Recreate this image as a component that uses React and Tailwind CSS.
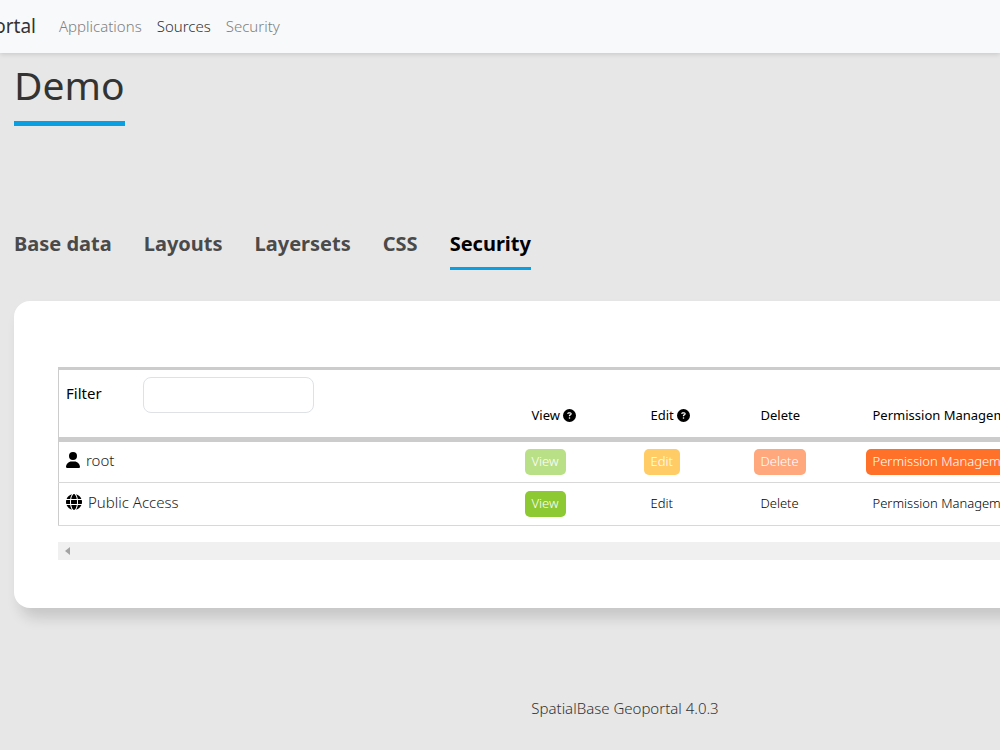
import React from 'react';
import { FaUser, FaGlobe, FaCircleQuestion } from 'react-icons/fa6';
import clsx from 'clsx';

const navLinks = [
  { label: 'Applications' },
  { label: 'Sources', active: true },
  { label: 'Security' },
];

const tabs = ['Base data', 'Layouts', 'Layersets', 'CSS', 'Security'];

const permissions = [
  { key: 'view', label: 'View', help: true },
  { key: 'edit', label: 'Edit', help: true },
  { key: 'delete', label: 'Delete' },
  { key: 'permissions', label: 'Permission Management' },
];

const rows = [
  {
    name: 'root',
    icon: FaUser,
    grants: {
      view: 'bg-[#bae087] text-white',
      edit: 'bg-[#ffcc66] text-white',
      delete: 'bg-[#ffa77d] text-white',
      permissions: 'bg-[#ff7029] text-white',
    },
  },
  {
    name: 'Public Access',
    icon: FaGlobe,
    grants: { view: 'bg-[#8cc932] text-white' },
  },
];

function Navbar() {
  return (
    <header className="relative flex h-[53px] items-center bg-[#f8f9fb] pb-px shadow-[0_1px_5px_rgba(0,0,0,0.15)]">
      <a href="#" className="flex w-9 justify-end overflow-hidden text-[19px] text-[#333]">
        Geoportal
      </a>
      <nav className="ml-[23px] flex gap-[15px] text-[15px] font-light">
        {navLinks.map((link) => (
          <a key={link.label} href="#" className={link.active ? 'text-[#333]' : 'text-[#808080]'}>
            {link.label}
          </a>
        ))}
      </nav>
    </header>
  );
}

function Tabs() {
  return (
    <nav className="mt-[101px] flex gap-8 text-xl font-bold">
      {tabs.map((tab) => (
        <a
          key={tab}
          href="#"
          className={clsx(
            'border-b-3 pt-px pb-[7px] leading-8',
            tab === 'Security' ? 'border-[#0a9fe0] text-black' : 'border-transparent text-[#4a4a4a]'
          )}
        >
          {tab}
        </a>
      ))}
    </nav>
  );
}

function PermissionTable() {
  return (
    <div className="overflow-hidden">
      <table className="w-full table-fixed border-collapse border border-t-3 border-[#ccc] text-left">
        <colgroup>
          <col className="w-[458px]" />
          <col className="w-[119px]" />
          <col className="w-[110px]" />
          <col className="w-[112px]" />
          <col />
        </colgroup>
        <thead className="border-b-5 border-[#ccc]">
          <tr className="h-[71px]">
            <th className="px-[7px] pt-[7px] align-top font-normal">
              <div className="flex items-start">
                <label htmlFor="filter" className="w-[77px] text-[15px] leading-8 text-black">
                  Filter
                </label>
                <input
                  id="filter"
                  type="text"
                  className="h-9 w-[171px] rounded-lg border border-[#dee2e6] bg-white px-3 text-sm outline-none"
                />
              </div>
            </th>
            {permissions.map((p) => (
              <th key={p.key} className="px-2 pb-3 align-bottom text-[13px] font-normal whitespace-nowrap text-black">
                <span className="flex items-center gap-[3px] pl-[7px]">
                  {p.label}
                  {p.help && <FaCircleQuestion className="size-[13px]" />}
                </span>
              </th>
            ))}
          </tr>
        </thead>
        <tbody>
          {rows.map((row) => {
            const Icon = row.icon;
            return (
              <tr key={row.name} className="h-[43px] border-b border-[#d8d8d8]">
                <td className="px-[7px] text-[15px] font-light text-[#222]">
                  <span className="flex items-center gap-1.5 pb-1">
                    <Icon className={clsx('h-4 text-black', row.icon === FaUser ? 'w-3.5' : 'w-4')} />
                    {row.name}
                  </span>
                </td>
                {permissions.map((p) => (
                  <td key={p.key} className="px-2">
                    <button
                      type="button"
                      className={clsx(
                        'block h-[26px] rounded-[5px] px-[7px] text-[13px] font-light whitespace-nowrap',
                        row.grants[p.key] || 'text-black'
                      )}
                    >
                      {p.label}
                    </button>
                  </td>
                ))}
              </tr>
            );
          })}
        </tbody>
      </table>

      {/* Horizontal scroll track */}
      <div className="mt-4 flex h-[18px] items-center bg-[#f0f0f0] pl-[7px]">
        <svg viewBox="0 0 5 8" className="h-2 w-[5px] fill-[#a3a3a3]">
          <path d="M5 0v8L0 4z" />
        </svg>
      </div>
    </div>
  );
}

function App() {
  return (
    <div className="min-h-screen overflow-hidden bg-[#e7e7e7] font-['Noto_Sans','Open_Sans',sans-serif]">
      <Navbar />

      {/* The content is wider than the window and runs off to the right */}
      <div className="w-[125%] px-3.5">
        <main>
          <h1 className="inline-block border-b-5 border-[#0a9fe0] pt-1 pb-2 text-[39px] leading-14 text-[#333]">
            Demo
          </h1>
          <Tabs />
          <section className="mt-[31px] rounded-2xl bg-white px-11 pt-[66px] pb-12 shadow-[6px_10px_14px_rgba(0,0,0,0.14)]">
            <PermissionTable />
          </section>
        </main>
        <footer className="pt-[89px] pb-6 text-center text-[15px] font-light text-[#333]">SpatialBase Geoportal 4.0.3</footer>
      </div>
    </div>
  );
}

export default App;
